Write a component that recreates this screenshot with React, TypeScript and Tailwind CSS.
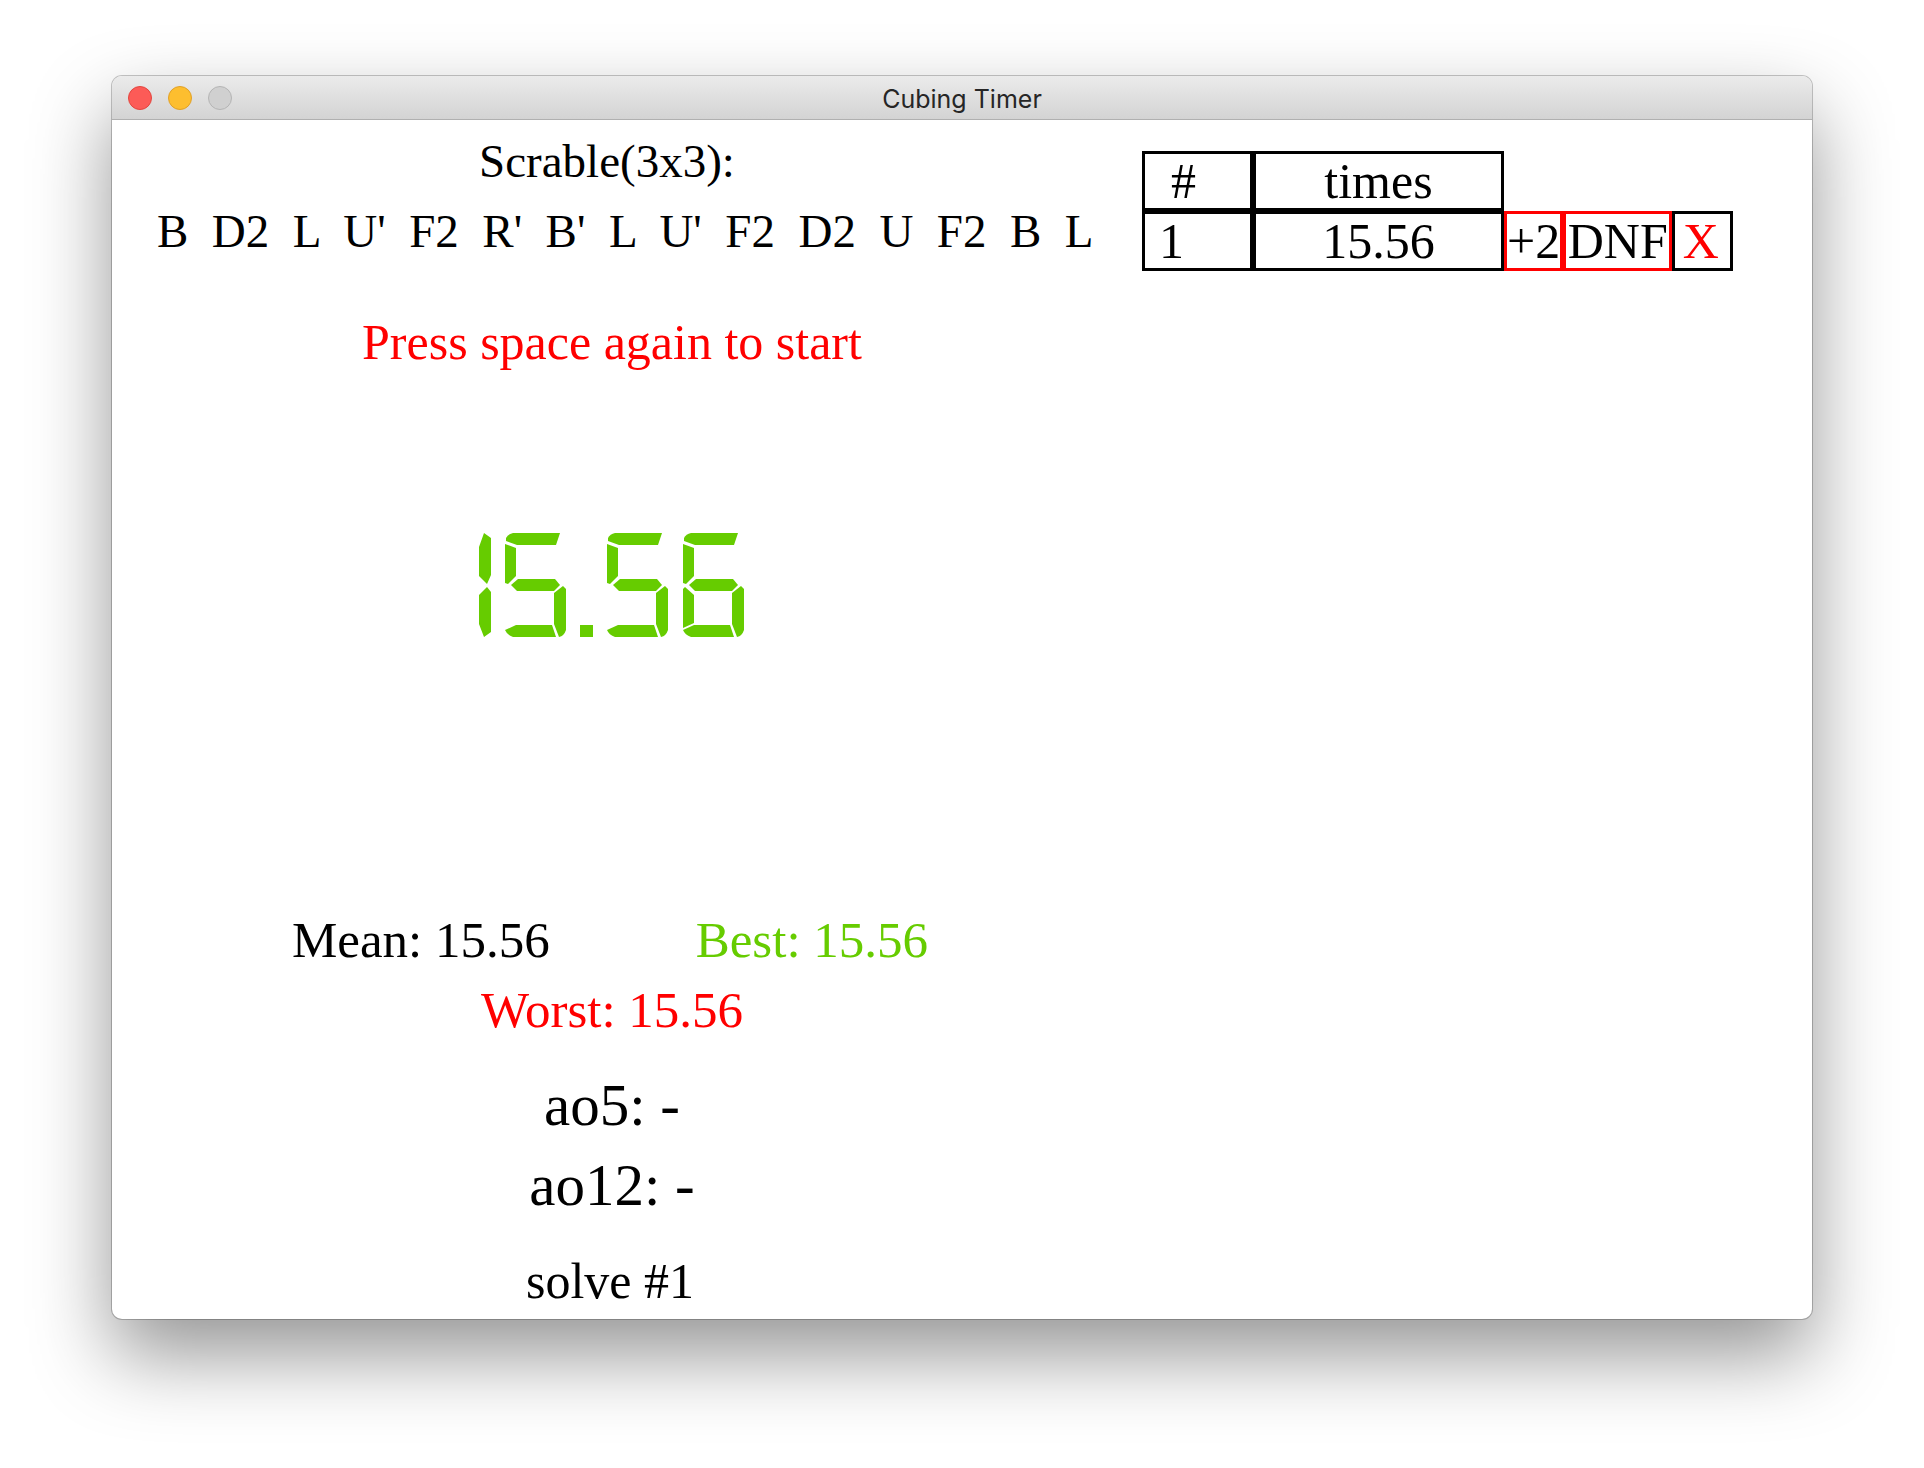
import React from "react";

const scramble = "B  D2  L  U'  F2  R'  B'  L  U'  F2  D2  U  F2  B  L";

const segments: Record<string, string> = {
  one: "M24 0 L31 5 V42 L27 51 L19 43 V14 Z M27 54 L31 59 V99 L24 104 L19 91 V62 Z",
  a: "M1 5 Q3 1 8 0 H55 L51 12 H12 L1 8 Z",
  f: "M0 11 L11 15 V43 L3 51 L0 50 Z",
  g: "M6 52 L13 46 H50 L55 52 L49 58 H12 Z",
  e: "M2 54 L11 62 V90 L0 95 V56 Z",
  c: "M49 60 L58 53 L61 56 V97 Q59 103 54 104 L49 91 Z",
  d: "M0 97 L11 92 H47 L51 104 H8 Q2 102 0 97 Z",
};

function Digit({ x, parts }: { x: number; parts: string[] }) {
  return (
    <g transform={`translate(${x} 0)`}>
      {parts.map((p) => (
        <path key={p} d={segments[p]} />
      ))}
    </g>
  );
}

function Clock() {
  return (
    <svg role="img" aria-label="15.56" viewBox="0 0 268 104" className="h-[104px] w-[268px] fill-[#66cc00]">
      <Digit x={-18} parts={["one"]} />
      <Digit x={27} parts={["a", "f", "g", "c", "d"]} />
      <path d="M102 92 H115 V104 H102 Z" />
      <Digit x={129} parts={["a", "f", "g", "c", "d"]} />
      <Digit x={205} parts={["a", "f", "g", "e", "c", "d"]} />
    </svg>
  );
}

export default function App() {
  return (
    <div className="min-h-screen bg-white px-28 pt-[76px] pb-[148px] font-['Liberation_Serif',serif] text-black">
      <main className="overflow-hidden rounded-[10px] bg-white shadow-[0_0_0_1px_rgba(0,0,0,0.22),0_36px_80px_rgba(0,0,0,0.42)]">
        <header className="grid h-11 grid-cols-[1fr_auto_1fr] items-center bg-linear-to-b from-[#ebebeb] to-[#d3d3d3] px-4 shadow-[inset_0_-1px_0_#b0b0b0]">
          <div className="flex gap-4">
            <button aria-label="Close" className="size-6 rounded-full border border-[#e2463f] bg-[#fc5b57]" />
            <button aria-label="Minimize" className="size-6 rounded-full border border-[#e0a028] bg-[#fdbe2f]" />
            <button aria-label="Zoom" disabled className="size-6 rounded-full border border-[#b4b4b4] bg-[#d0d0d0]" />
          </div>
          <h1 className="pt-0.5 font-[Inter,sans-serif] text-[25px] leading-8 text-[#262626]">Cubing Timer</h1>
        </header>

        <div className="flex items-start pb-2.5">
          <section className="flex w-[1000px] shrink-0 flex-col items-center">
            <h2 className="mt-[15px] pr-2.5 text-[47px] leading-[52px]">Scrable(3x3):</h2>
            <p className="mt-4 self-start pl-[45px] text-[47px] leading-[56px] whitespace-pre">{scramble}</p>
            <p className="mt-[55px] text-[50px] leading-[56px] text-[#ff0000]">Press space again to start</p>
            <div className="mt-[163px]">
              <Clock />
            </div>
            <div className="mt-[275px] flex gap-[146px] pr-1 text-[51px] leading-[56px]">
              <p>Mean: 15.56</p>
              <p className="text-[#66cc00]">Best: 15.56</p>
            </div>
            <p className="mt-3.5 text-[51px] leading-[56px] text-[#ff0000]">Worst: 15.56</p>
            <p className="mt-[35px] text-[59px] leading-[64px]">ao5: -</p>
            <p className="mt-4 text-[59px] leading-[64px]">ao12: -</p>
            <p className="mt-9 pr-1 text-[50px] leading-[56px]">solve #1</p>
          </section>

          <table className="mt-[31px] ml-[30px] table-fixed border-separate border-spacing-0 text-[50px] leading-[54px]">
            <thead>
              <tr>
                <th className="w-[111px] border-[3px] border-black p-0 pr-7 font-normal">#</th>
                <th className="w-[251px] border-[3px] border-black p-0 font-normal">times</th>
              </tr>
            </thead>
            <tbody>
              <tr>
                <td className="border-[3px] border-black py-0 pl-3.5">1</td>
                <td className="border-[3px] border-black p-0 text-center">15.56</td>
                <td className="w-[59px] border-[3px] border-[#ff0000] p-0">
                  <button className="block w-full">+2</button>
                </td>
                <td className="w-[109px] border-[3px] border-[#ff0000] p-0">
                  <button className="block w-full">DNF</button>
                </td>
                <td className="w-[61px] border-[3px] border-black p-0">
                  <button className="block w-full pr-1 text-[#ff0000]">X</button>
                </td>
              </tr>
            </tbody>
          </table>
        </div>
      </main>
    </div>
  );
}
